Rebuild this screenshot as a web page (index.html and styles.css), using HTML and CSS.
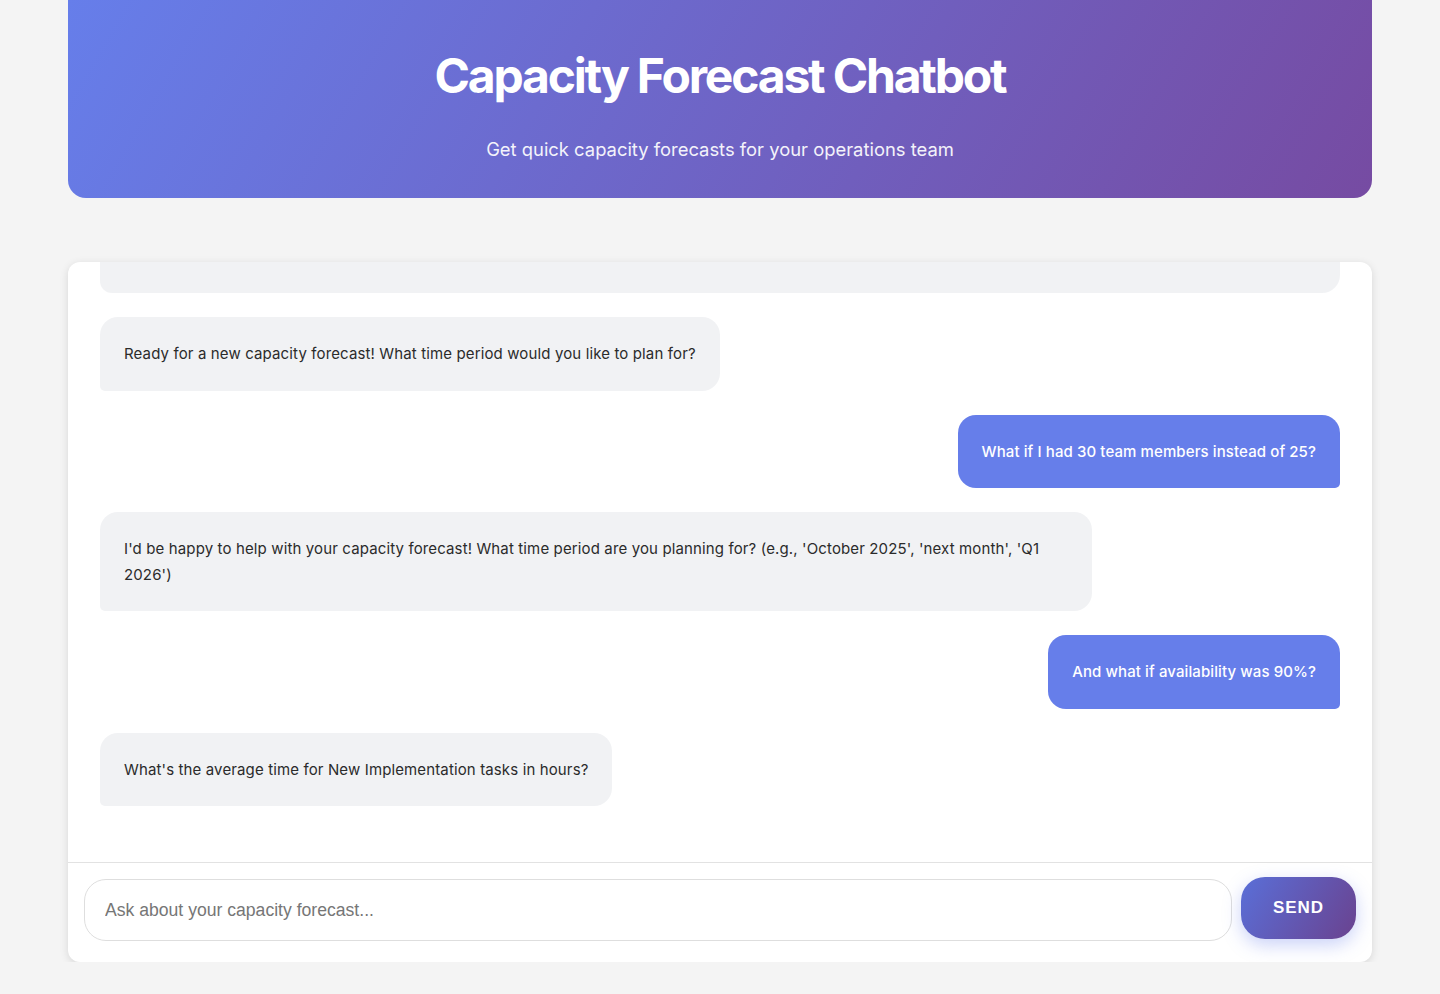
FILE: index.html
```html
<!DOCTYPE html>
<html lang="en">
<head>
<meta charset="utf-8">
<title>Capacity Forecast Chatbot</title>
<link rel="stylesheet" href="styles.css">
</head>
<body>
<div class="page">
  <header class="hero">
    <h1 class="hero-title">Capacity Forecast Chatbot</h1>
    <p class="hero-sub">Get quick capacity forecasts for your operations team</p>
  </header>

  <main class="chat">
    <div class="messages">
      <div class="msg bot partial"></div>
      <div class="msg bot">Ready for a new capacity forecast! What time period would you like to plan for?</div>
      <div class="msg user">What if I had 30 team members instead of 25?</div>
      <div class="msg bot">I'd be happy to help with your capacity forecast! What time period are you planning for? (e.g., 'October 2025', 'next month', 'Q1 2026')</div>
      <div class="msg user">And what if availability was 90%?</div>
      <div class="msg bot">What's the average time for New Implementation tasks in hours?</div>
    </div>
    <form class="composer">
      <input class="composer-input" type="text" placeholder="Ask about your capacity forecast...">
      <button class="composer-send" type="button">Send</button>
    </form>
  </main>
</div>
</body>
</html>
```

FILE: styles.css
```css
* { box-sizing: border-box; }

html, body {
  margin: 0;
  padding: 0;
}

body {
  background: #f4f4f4;
  font-family: Inter, "Noto Sans", sans-serif;
  color: #2b2b2b;
}

.page {
  margin: 0 68px;
  display: flex;
  flex-direction: column;
  gap: 64px;
}

.hero {
  height: 198px;
  border-radius: 0 0 18px 18px;
  background: linear-gradient(120deg, #667eea 0%, #764ba2 100%);
  color: #fff;
  text-align: center;
  display: flex;
  flex-direction: column;
  align-items: center;
  padding-top: 48px;
}

.hero-title {
  margin: 0;
  font-size: 48px;
  line-height: 56px;
  font-weight: 700;
  letter-spacing: -2.2px;
}

.hero-sub {
  margin: 33px 0 0;
  font-size: 18.4px;
  line-height: 24px;
  font-weight: 400;
  opacity: 0.92;
}

.chat {
  background: #fff;
  border-radius: 12px;
  box-shadow: 0 2px 8px rgba(0, 0, 0, 0.12);
  overflow: hidden;
  display: flex;
  flex-direction: column;
}

.messages {
  height: 601px;
  overflow: hidden;
  padding: 0 32px 32px;
  display: flex;
  flex-direction: column;
  justify-content: flex-end;
  border-bottom: 1px solid #e2e2e2;
}

.msg {
  flex: none;
  margin-bottom: 24px;
  padding: 24px;
  font-size: 15px;
  line-height: 25.5px;
  letter-spacing: 0.13px;
  border-radius: 18px;
  max-width: 80%;
}

.bot {
  align-self: flex-start;
  background: #f1f2f4;
  color: #2b2b2b;
  border-bottom-left-radius: 5px;
}

.user {
  align-self: flex-end;
  background: #667eea;
  color: #fff;
  font-weight: 500;
  letter-spacing: 0.1px;
  border-bottom-right-radius: 5px;
}

.partial {
  align-self: stretch;
  max-width: none;
  height: 120px;
  border-bottom-left-radius: 12px;
  border-bottom-right-radius: 18px;
  background:
    linear-gradient(to bottom, #dcdde0 0px, #e8e9ec 10px, #f1f2f4 24px, #f1f2f4 100%);
}

.composer {
  margin: 0;
  display: flex;
  align-items: center;
  gap: 9px;
  padding: 16px 16px 21px;
}

.composer-input {
  flex: 1;
  height: 62px;
  border: 1px solid #dedede;
  border-radius: 22px;
  padding: 0 20px;
  font-family: "Liberation Sans", Arial, sans-serif;
  font-size: 17.6px;
  color: #333;
  background: #fff;
  outline: none;
}

.composer-input::placeholder {
  color: #767676;
}

.composer-send {
  width: 115px;
  height: 62px;
  border: none;
  border-radius: 24px;
  background: linear-gradient(120deg, #5a6fd8 0%, #6a428f 100%);
  color: #fff;
  font-family: "Liberation Sans", Arial, sans-serif;
  font-weight: 700;
  font-size: 17px;
  letter-spacing: 1px;
  text-transform: uppercase;
  box-shadow: 0 6px 18px rgba(102, 126, 234, 0.35);
  transform: translateY(-2px);
  cursor: pointer;
}
```
